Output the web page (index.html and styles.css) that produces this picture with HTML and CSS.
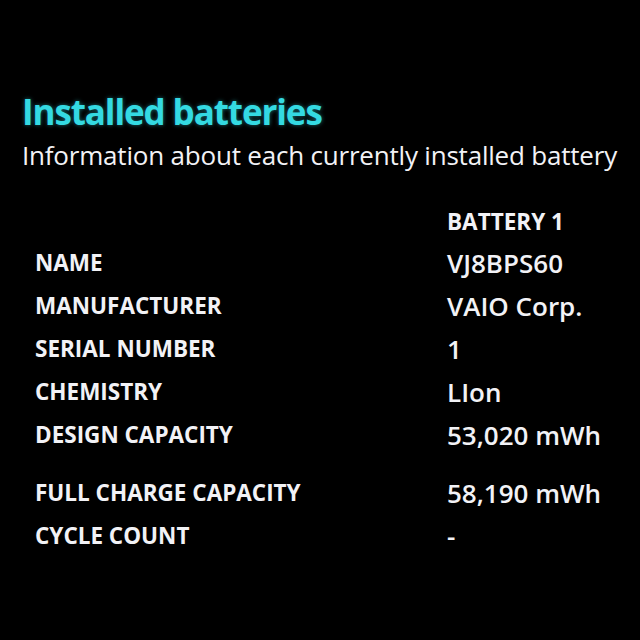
FILE: index.html
```html
<!DOCTYPE html>
<html>
<head>
<meta charset="utf-8">
<link rel="stylesheet" href="styles.css">
</head>
<body>
<main class="screen">
  <h1 class="title">Installed batteries</h1>
  <p class="subtitle">Information about each currently installed battery</p>
  <div class="table">
    <div class="row head"><span class="label"></span><span class="value strong">BATTERY 1</span></div>
    <div class="row"><span class="label">NAME</span><span class="value">VJ8BPS60</span></div>
    <div class="row"><span class="label">MANUFACTURER</span><span class="value">VAIO Corp.</span></div>
    <div class="row"><span class="label">SERIAL NUMBER</span><span class="value">1</span></div>
    <div class="row"><span class="label">CHEMISTRY</span><span class="value">LIon</span></div>
    <div class="row"><span class="label">DESIGN CAPACITY</span><span class="value">53,020 mWh</span></div>
    <div class="row gap"><span class="label">FULL CHARGE CAPACITY</span><span class="value">58,190 mWh</span></div>
    <div class="row"><span class="label">CYCLE COUNT</span><span class="value">-</span></div>
  </div>
</main>
</body>
</html>
```
FILE: styles.css
```css
html, body {
  margin: 0;
  padding: 0;
  background: #000;
}
.screen {
  width: 640px;
  height: 640px;
  box-sizing: border-box;
  padding: 92px 0 0 22px;
  font-family: "Open Sans", "Noto Sans", sans-serif;
  color: #f2f2f6;
}
.title {
  margin: 0;
  font-size: 35px;
  font-weight: 700;
  line-height: 40px;
  color: #34dae2;
  letter-spacing: -1.1px;
  text-shadow: 0 0 4px rgba(52, 218, 226, 0.5);
}
.subtitle {
  margin: 8px 0 0 0;
  font-size: 26px;
  line-height: 30px;
  font-weight: 400;
  letter-spacing: -0.2px;
}
.table {
  margin-top: 32px;
  padding-left: 13px;
  display: flex;
  flex-direction: column;
}
.row {
  display: grid;
  grid-template-columns: 412px 1fr;
  height: 43px;
  align-items: center;
}
.row.head {
  height: 39px;
}
.row.gap {
  margin-top: 15px;
}
.label {
  font-size: 22.5px;
  font-weight: 700;
  letter-spacing: 0;
}
.value {
  font-size: 26px;
  font-weight: 600;
  letter-spacing: 0;
}
.value.strong {
  font-size: 22.5px;
  font-weight: 700;
}
```
